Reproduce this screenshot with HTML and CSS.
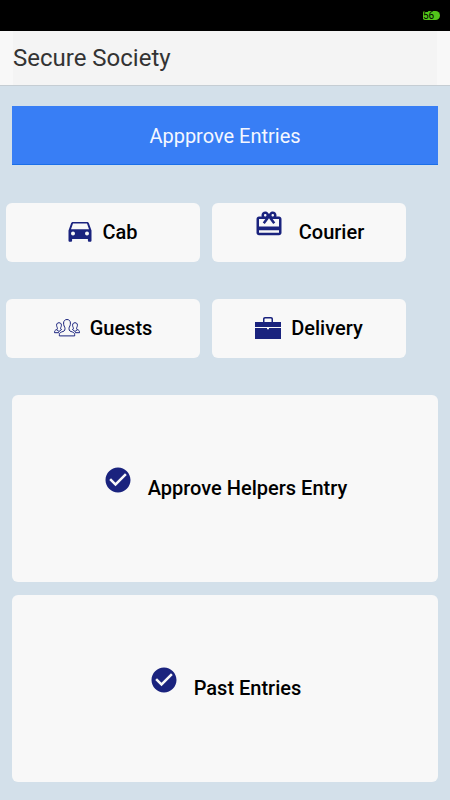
FILE: index.html
```
<!DOCTYPE html>
<html lang="en">

<head>
    <meta charset="UTF-8">
    <meta name="viewport" content="width=device-width, initial-scale=1.0">
    <title>Secure Society</title>
    <link rel="stylesheet" href="styles.css">
</head>

<body>
    <div class="statusbar">
        <span class="battery">56</span>
    </div>

    <header class="header">
        <h1 class="title">Secure Society</h1>
    </header>

    <main class="content">
        <button type="button" class="banner">Appprove Entries</button>

        <div class="tiles">
            <button type="button" class="tile">
                <svg class="icon car" viewBox="0 0 24 20" aria-hidden="true">
                    <path fill-rule="evenodd" d="M21 1.4C20.7.6 20 0 19 0H5C4 0 3.300.6 3 1.400L.5 8.500V18.500c0 .8.500 1.300 1.300 1.300h1c.8 0 1.300-.5 1.300-1.300V17h15.800v1.500c0 .8.500 1.300 1.300 1.300h1c.8 0 1.300-.5 1.300-1.300V8.500zM5 13.500a2 2 0 1 1 0-4 2 2 0 0 1 0 4zm14 0a2 2 0 1 1 0-4 2 2 0 0 1 0 4zM3 7.300 5 1.500h14l2 5.800z" />
                </svg>
                Cab
            </button>
            <button type="button" class="tile raised">
                <svg class="icon large" viewBox="0 0 24 24" aria-hidden="true">
                    <path d="M20 6h-2.180c.11-.31.18-.65.18-1 0-1.660-1.340-3-3-3-1.050 0-1.960.54-2.500 1.350l-.5.670-.5-.68C10.960 2.540 10.050 2 9 2 7.340 2 6 3.340 6 5c0 .35.070.69.180 1H4c-1.110 0-1.990.89-1.990 2L2 19c0 1.110.89 2 2 2h16c1.110 0 2-.89 2-2V8c0-1.110-.89-2-2-2zm-5-2c.55 0 1 .45 1 1s-.45 1-1 1-1-.45-1-1 .45-1 1-1zM9 4c.55 0 1 .45 1 1s-.45 1-1 1-1-.45-1-1 .45-1 1-1zm11 15H4v-2h16v2zm0-5H4V8h5.080L7 10.830 8.620 12 11 8.760l1-1.360 1 1.360L15.380 12 17 10.830 14.920 8H20v6z" />
                </svg>
                Courier
            </button>
            <button type="button" class="tile">
                <svg class="icon people" viewBox="0 0 26 18" aria-hidden="true">
                    <path d="M13 .5c-2.200 0-3.400 1.500-3.400 3.500 0 1.300.1 2 .5 3 .5 1 .9 1.300.9 2.500 0 2.800-1.300 2.700-3.500 3.500-1.800.6-2.200 1.500-2.200 3.900h15.400c0-2.400-.4-3.300-2.200-3.900-2.200-.8-3.500-.7-3.500-3.500 0-1.200.4-1.500.9-2.500.4-1 .5-1.700.5-3 0-2-1.200-3.500-3.400-3.500z" />
                    <path d="M7.600 10.500c-1.600-.3-1-1.800-.4-3 .5-1.500.3-3.800-2.200-3.800S2.300 6 2.800 7.500c.6 1.200 1.200 2.700-.4 3.300-1.500.4-1.900 1-1.900 2.900H5M2.500 10.500l2.500 2 2.500-2" />
                    <path d="M18.400 10.500c1.600-.3 1-1.800.4-3-.5-1.500-.3-3.800 2.200-3.800s2.700 2.300 2.200 3.800c-.6 1.200-1.200 2.700.4 3.300 1.500.4 1.900 1 1.900 2.900H21M23.500 10.500l-2.500 2-2.500-2" />
                </svg>
                Guests
            </button>
            <button type="button" class="tile">
                <svg class="icon case" viewBox="0 0 26 22" aria-hidden="true">
                    <path d="M8 5V2c0-1.200.8-2 2-2h6c1.200 0 2 .8 2 2v3h8v5H0V5zm1.500 0h7V2.200c0-.5-.2-.7-.7-.7h-5.600c-.5 0-.7.2-.7.700zM0 11h12v1.300h2V11h12v11H0z" fill-rule="evenodd" />
                </svg>
                Delivery
            </button>
        </div>

        <button type="button" class="card raised">
            <svg class="icon large" viewBox="0 0 24 24" aria-hidden="true">
                <path d="M12 2C6.480 2 2 6.480 2 12s4.480 10 10 10 10-4.480 10-10S17.520 2 12 2zm-2 15l-5-5 1.410-1.410L10 14.170l7.590-7.590L19 8l-9 9z" />
            </svg>
            Approve Helpers Entry
        </button>
        <button type="button" class="card raised">
            <svg class="icon large" viewBox="0 0 24 24" aria-hidden="true">
                <path d="M12 2C6.480 2 2 6.480 2 12s4.480 10 10 10 10-4.480 10-10S17.520 2 12 2zm-2 15l-5-5 1.410-1.410L10 14.170l7.590-7.590L19 8l-9 9z" />
            </svg>
            Past Entries
        </button>
    </main>
</body>

</html>
```
FILE: styles.css
```
* {
    box-sizing: border-box;
}

body {
    margin: 0;
    min-height: 100vh;
    background: #d3e0ea;
    font-family: Roboto, sans-serif;
    color: #000;
}

button {
    border: 0;
    padding: 0;
    font-family: inherit;
    cursor: pointer;
}

.statusbar {
    display: flex;
    justify-content: flex-end;
    align-items: center;
    height: 31px;
    padding: 0 10px;
    background: #000;
}

.battery {
    width: 17px;
    height: 9px;
    border-radius: 2px 5px 5px 2px;
    background: #52c41a;
    font-size: 10px;
    line-height: 9px;
    color: #000;
}

.header {
    padding: 0 13px;
    background: #f8f8f8;
    border-bottom: 1px solid #c5cdd3;
}

.title {
    margin: 0;
    background: #f4f4f4;
    font-size: 24px;
    font-weight: 400;
    line-height: 54px;
    color: #333;
}

.content {
    display: flex;
    flex-direction: column;
    padding: 20px 12px;
}

.banner {
    height: 59px;
    background: #387ef5;
    box-shadow: inset 0 -1px #1b6fe8;
    font-size: 20px;
    color: #f4f7ff;
}

.tiles {
    display: grid;
    grid-template-columns: 1fr 1fr;
    gap: 37px 12px;
    margin: 38px 32px 37px -6px;
}

.tile,
.card {
    display: flex;
    justify-content: center;
    align-items: center;
    gap: 10px;
    padding-bottom: 2px;
    background: #f8f8f8;
    border-radius: 6px;
    font-size: 20px;
    font-weight: 500;
    color: #000;
}

.tile {
    height: 59px;
}

.card {
    height: 187px;
}

.card + .card {
    margin-top: 13px;
}

/* icon stands on the text baseline */
.raised {
    display: block;
    padding-bottom: 12px;
    text-align: center;
}

.raised .icon {
    margin-right: 10px;
}

.icon {
    fill: #1a237e;
}

.large {
    width: 30px;
    height: 30px;
}

.car {
    width: 24px;
    height: 20px;
}

.people {
    width: 26px;
    height: 18px;
    fill: none;
    stroke: #1a237e;
    stroke-width: 1;
}

.case {
    width: 26px;
    height: 22px;
}
```
